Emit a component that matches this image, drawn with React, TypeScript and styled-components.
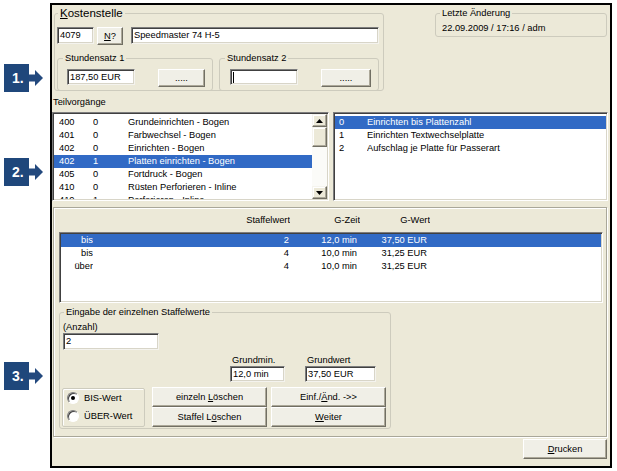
import React from "react";
import styled, { createGlobalStyle } from "styled-components";

const GlobalStyle = createGlobalStyle`
  html, body {
    margin: 0;
    padding: 0;
    background: #fff;
  }
  body {
    font-family: "Liberation Sans", Arial, sans-serif;
    font-size: 9.3px;
    color: #000;
  }
  * {
    box-sizing: border-box;
  }
`;

const Page = styled.div`
  display: flex;
  align-items: flex-start;
  width: 617px;
  height: 471px;
  padding-top: 3px;
`;

/* left column with the numbered callouts */
const Gutter = styled.div`
  display: flex;
  flex-direction: column;
  width: 50px;
  flex: none;
`;

const Callout = styled.div<{ $gap: number }>`
  display: flex;
  align-items: center;
  height: 28px;
  margin: ${(p) => p.$gap}px 0 0 4px;
`;

const Badge = styled.div`
  width: 25px;
  height: 28px;
  background: #1f477b;
  color: #fff;
  font-size: 14px;
  font-weight: bold;
  display: flex;
  align-items: center;
  padding-left: 8px;
`;

/* the dialog window */
const Window = styled.div`
  width: 562px;
  height: 465px;
  flex: none;
  border: 2px solid #000;
  background: #ece9d8;
  display: flex;
  flex-direction: column;
  padding-top: 2px;
`;

const TopRow = styled.div`
  display: flex;
  align-items: flex-start;
`;

const Group = styled.fieldset<{ $w: number; $h: number; $pl: number; $pt?: number }>`
  margin: 0;
  min-inline-size: 0;
  width: ${(p) => p.$w}px;
  height: ${(p) => p.$h}px;
  flex: none;
  border: 1px solid #cdcbbd;
  border-radius: 3px;
  padding: ${(p) => p.$pt ?? 0}px 0 0 ${(p) => p.$pl}px;
`;

const Legend = styled.legend<{ $x: number; $big?: boolean }>`
  padding: 0 2px;
  margin-left: ${(p) => p.$x}px;
  line-height: 13px;
  font-size: ${(p) => (p.$big ? "11.5px" : "9.3px")};
`;

const Row = styled.div<{ $gap?: number; $mt?: number; $ml?: number }>`
  display: flex;
  align-items: flex-start;
  gap: ${(p) => p.$gap ?? 0}px;
  margin-top: ${(p) => p.$mt ?? 0}px;
  margin-left: ${(p) => p.$ml ?? 0}px;
`;

const Field = styled.div<{ $w: number; $h?: number; $ml?: number }>`
  width: ${(p) => p.$w}px;
  height: ${(p) => p.$h ?? 17}px;
  margin-left: ${(p) => p.$ml ?? 0}px;
  flex: none;
  background: #fff;
  border: 1px solid;
  border-color: #7d7d7d #f4f3ee #f4f3ee #7d7d7d;
  box-shadow: inset 1px 1px 0 #404040, inset -1px -1px 0 #d8d5c8;
  padding-left: 2px;
  line-height: ${(p) => (p.$h ?? 17) - 2}px;
  white-space: nowrap;
  overflow: hidden;
`;

const Caret = styled.span`
  display: inline-block;
  width: 1px;
  height: 11px;
  background: #000;
  vertical-align: middle;
`;

const Button = styled.div<{ $w: number; $h?: number; $ml?: number }>`
  width: ${(p) => p.$w}px;
  height: ${(p) => p.$h ?? 18}px;
  margin-left: ${(p) => p.$ml ?? 0}px;
  flex: none;
  display: flex;
  align-items: center;
  justify-content: center;
  background: #f0efe7;
  border: 1px solid;
  border-color: #fff #716f64 #716f64 #fff;
  box-shadow: inset -1px -1px 0 #aca899;
  white-space: nowrap;
`;

const Key = styled.span`
  text-decoration: underline;
`;

const InfoText = styled.div`
  margin-top: 2px;
  line-height: 13px;
`;

const SectionLabel = styled.div`
  margin: 5px 0 0 1px;
  height: 13px;
  line-height: 13px;
`;

const ListsRow = styled.div`
  display: flex;
  gap: 4px;
  margin-top: 3px;
  height: 89px;
`;

const ListBox = styled.div<{ $w: number; $h: number; $ml?: number; $mt?: number }>`
  width: ${(p) => p.$w}px;
  height: ${(p) => p.$h}px;
  margin: ${(p) => p.$mt ?? 0}px 0 0 ${(p) => p.$ml ?? 0}px;
  flex: none;
  background: #fff;
  border: 1px solid;
  border-color: #7d7d7d #fff #fff #7d7d7d;
  box-shadow: inset 1px 1px 0 #404040, inset -1px -1px 0 #d8d5c8;
  padding: 1px;
  display: flex;
  overflow: hidden;
`;

const Rows = styled.div<{ $pt: number }>`
  flex: 1;
  padding-top: ${(p) => p.$pt}px;
  overflow: hidden;
`;

const ListRow = styled.div<{ $cols: string; $sel?: boolean; $pl?: number }>`
  display: grid;
  grid-template-columns: ${(p) => p.$cols};
  height: 13px;
  line-height: 13px;
  padding-left: ${(p) => p.$pl ?? 0}px;
  background: ${(p) => (p.$sel ? "#316ac5" : "transparent")};
  color: ${(p) => (p.$sel ? "#fff" : "#000")};
  white-space: nowrap;
`;

const Cell = styled.span<{ $right?: boolean }>`
  text-align: ${(p) => (p.$right ? "right" : "left")};
  overflow: hidden;
`;

const ScrollBar = styled.div`
  width: 15px;
  flex: none;
  display: flex;
  flex-direction: column;
  background: #fbfbf8;
`;

const ScrollBtn = styled.div<{ $h: number }>`
  height: ${(p) => p.$h}px;
  display: flex;
  align-items: center;
  justify-content: center;
  background: #ece9d8;
  border: 1px solid;
  border-color: #f5f4ee #716f64 #716f64 #f5f4ee;
  box-shadow: inset -1px -1px 0 #aca899, inset 1px 1px 0 #fff;
`;

const Track = styled.div`
  flex: 1;
`;

const Panel = styled.div`
  margin: 6px 0 0 1px;
  width: 554px;
  height: 230px;
  flex: none;
  border: 1px solid #a9a799;
  box-shadow: inset 1px 1px 0 #fff, 1px 1px 0 #fff;
  display: flex;
  flex-direction: column;
  padding: 6px 0 0 5px;
`;

const HeaderRow = styled.div`
  display: grid;
  grid-template-columns: 32px 197px 70px 70px;
  padding-left: 2px;
  height: 13px;
  line-height: 13px;
`;

const Caption = styled.div<{ $ml?: number }>`
  line-height: 12px;
  height: 12px;
  margin-left: ${(p) => p.$ml ?? 0}px;
`;

const Column = styled.div<{ $w: number }>`
  display: flex;
  flex-direction: column;
  width: ${(p) => p.$w}px;
`;

const RadioBox = styled.div`
  width: 83px;
  height: 39px;
  margin: 1px 0 0 -1px;
  flex: none;
  border: 1px solid #cdcbbd;
  border-radius: 2px;
  box-shadow: inset 1px 1px 0 #fff;
  padding: 0 0 0 4px;
`;

const RadioRow = styled.div`
  display: flex;
  align-items: center;
  gap: 5px;
  height: 18px;
`;

const RadioDot = styled.div<{ $on?: boolean }>`
  width: 12px;
  height: 12px;
  border-radius: 50%;
  background: #fff;
  border: 1px solid;
  border-color: #7d7d7d #fff #fff #7d7d7d;
  box-shadow: inset 1px 1px 0 #404040;
  display: flex;
  align-items: center;
  justify-content: center;
  &::after {
    content: "";
    width: 4px;
    height: 4px;
    border-radius: 50%;
    background: ${(p) => (p.$on ? "#000" : "transparent")};
  }
`;

const ButtonGrid = styled.div`
  display: grid;
  grid-template-columns: 115px 115px;
  grid-auto-rows: 20px;
  column-gap: 4px;
  margin-left: 7px;
`;

const Footer = styled.div`
  display: flex;
  justify-content: flex-end;
  margin: 2px 3px 0 0;
`;

function Arrow() {
  return (
    <svg width="14" height="16" viewBox="0 0 14 16">
      <rect x="0" y="4.5" width="7" height="7" fill="#23497e" />
      <polygon points="6,0 14,8 6,16" fill="#23497e" />
    </svg>
  );
}

function ScrollArrow({ up }: { up?: boolean }) {
  return (
    <svg width="7" height="4" viewBox="0 0 7 4">
      <polygon points={up ? "0,4 7,4 3.5,0" : "0,0 7,0 3.5,4"} fill="#000" />
    </svg>
  );
}

const teilvorgaenge = [
  ["400", "0", "Grundeinrichten - Bogen"],
  ["401", "0", "Farbwechsel - Bogen"],
  ["402", "0", "Einrichten - Bogen"],
  ["402", "1", "Platten einrichten - Bogen"],
  ["405", "0", "Fortdruck - Bogen"],
  ["410", "0", "Rüsten Perforieren - Inline"],
  ["410", "1", "Perforieren - Inline"],
];

const positionen = [
  ["0", "Einrichten bis Plattenzahl"],
  ["1", "Einrichten Textwechselplatte"],
  ["2", "Aufschlag je Platte für Passerart"],
];

const staffel = [
  ["bis", "2", "12,0 min", "37,50 EUR"],
  ["bis", "4", "10,0 min", "31,25 EUR"],
  ["über", "4", "10,0 min", "31,25 EUR"],
];

export default function App() {
  return (
    <>
      <GlobalStyle />
      <Page>
        <Gutter>
          <Callout $gap={61}>
            <Badge>1.</Badge>
            <Arrow />
          </Callout>
          <Callout $gap={66}>
            <Badge>2.</Badge>
            <Arrow />
          </Callout>
          <Callout $gap={176}>
            <Badge>3.</Badge>
            <Arrow />
          </Callout>
        </Gutter>

        <Window>
          <TopRow>
            {/* Kostenstelle */}
            <Group $w={330} $h={84} $pl={2} style={{ marginLeft: 2 }}>
              <Legend $x={1} $big>
                <Key>K</Key>ostenstelle
              </Legend>
              <Row $mt={7}>
                <Field $w={37}>4079</Field>
                <Button $w={26} $ml={3}>
                  <Key>N</Key>?
                </Button>
                <Field $w={248} $ml={8}>
                  Speedmaster 74 H-5
                </Field>
              </Row>
              <Row $mt={7} $gap={6}>
                <Group $w={156} $h={39} $pl={9} $pt={4}>
                  <Legend $x={-4}>Stundensatz 1</Legend>
                  <Row>
                    <Field $w={68} $h={16}>
                      187,50 EUR
                    </Field>
                    <Button $w={47} $ml={23}>
                      .....
                    </Button>
                  </Row>
                </Group>
                <Group $w={160} $h={39} $pl={10} $pt={4}>
                  <Legend $x={-5}>Stundensatz 2</Legend>
                  <Row>
                    <Field $w={68} $h={16}>
                      <Caret />
                    </Field>
                    <Button $w={50} $ml={23}>
                      .....
                    </Button>
                  </Row>
                </Group>
              </Row>
            </Group>

            {/* Letzte Änderung */}
            <Group $w={172} $h={30} $pl={6} style={{ marginLeft: 51 }}>
              <Legend $x={-2}>Letzte Änderung</Legend>
              <InfoText>22.09.2009 / 17:16 / adm</InfoText>
            </Group>
          </TopRow>

          <SectionLabel>Teilvorgänge</SectionLabel>

          <ListsRow>
            <ListBox $w={277} $h={89}>
              <Rows $pt={2}>
                {teilvorgaenge.map(([code, nr, text], i) => (
                  <ListRow key={i} $cols="34px 35px 1fr" $pl={5} $sel={i === 3}>
                    <Cell>{code}</Cell>
                    <Cell>{nr}</Cell>
                    <Cell>{text}</Cell>
                  </ListRow>
                ))}
              </Rows>
              <ScrollBar>
                <ScrollBtn $h={13}>
                  <ScrollArrow up />
                </ScrollBtn>
                <ScrollBtn $h={20} />
                <Track />
                <ScrollBtn $h={13}>
                  <ScrollArrow />
                </ScrollBtn>
              </ScrollBar>
            </ListBox>

            <ListBox $w={275} $h={89}>
              <Rows $pt={2}>
                {positionen.map(([nr, text], i) => (
                  <ListRow key={i} $cols="28px 1fr" $pl={4} $sel={i === 0}>
                    <Cell>{nr}</Cell>
                    <Cell>{text}</Cell>
                  </ListRow>
                ))}
              </Rows>
            </ListBox>
          </ListsRow>

          {/* Staffelwerte */}
          <Panel>
            <HeaderRow>
              <Cell />
              <Cell $right>Staffelwert</Cell>
              <Cell $right>G-Zeit</Cell>
              <Cell $right>G-Wert</Cell>
            </HeaderRow>

            <ListBox $w={544} $h={71} $mt={5}>
              <Rows $pt={0}>
                {staffel.map(([art, wert, zeit, betrag], i) => (
                  <ListRow key={i} $cols="32px 196px 68px 70px" $sel={i === 0}>
                    <Cell $right>{art}</Cell>
                    <Cell $right>{wert}</Cell>
                    <Cell $right>{zeit}</Cell>
                    <Cell $right>{betrag}</Cell>
                  </ListRow>
                ))}
              </Rows>
            </ListBox>

            <Group $w={332} $h={123} $pl={3} $pt={2} style={{ marginTop: 3 }}>
              <Legend $x={1}>Eingabe der einzelnen Staffelwerte</Legend>
              <Caption>(Anzahl)</Caption>
              <Field $w={96}>2</Field>

              <Row $mt={4} $ml={167} $gap={20}>
                <Column $w={55}>
                  <Caption $ml={2}>Grundmin.</Caption>
                  <Field $w={55} $h={16}>
                    12,0 min
                  </Field>
                </Column>
                <Column $w={71}>
                  <Caption $ml={2}>Grundwert</Caption>
                  <Field $w={71} $h={16}>
                    37,50 EUR
                  </Field>
                </Column>
              </Row>

              <Row $mt={5}>
                <RadioBox>
                  <RadioRow>
                    <RadioDot $on />
                    BIS-Wert
                  </RadioRow>
                  <RadioRow>
                    <RadioDot />
                    ÜBER-Wert
                  </RadioRow>
                </RadioBox>
                <ButtonGrid>
                  <Button $w={115} $h={20}>
                    einzeln&nbsp;<Key>L</Key>öschen
                  </Button>
                  <Button $w={115} $h={20}>
                    Einf./<Key>Ä</Key>nd. -&gt;&gt;
                  </Button>
                  <Button $w={115} $h={20}>
                    Staffel L<Key>ö</Key>schen
                  </Button>
                  <Button $w={115} $h={20}>
                    <Key>W</Key>eiter
                  </Button>
                </ButtonGrid>
              </Row>
            </Group>
          </Panel>

          <Footer>
            <Button $w={84} $h={20}>
              <Key>D</Key>rucken
            </Button>
          </Footer>
        </Window>
      </Page>
    </>
  );
}
